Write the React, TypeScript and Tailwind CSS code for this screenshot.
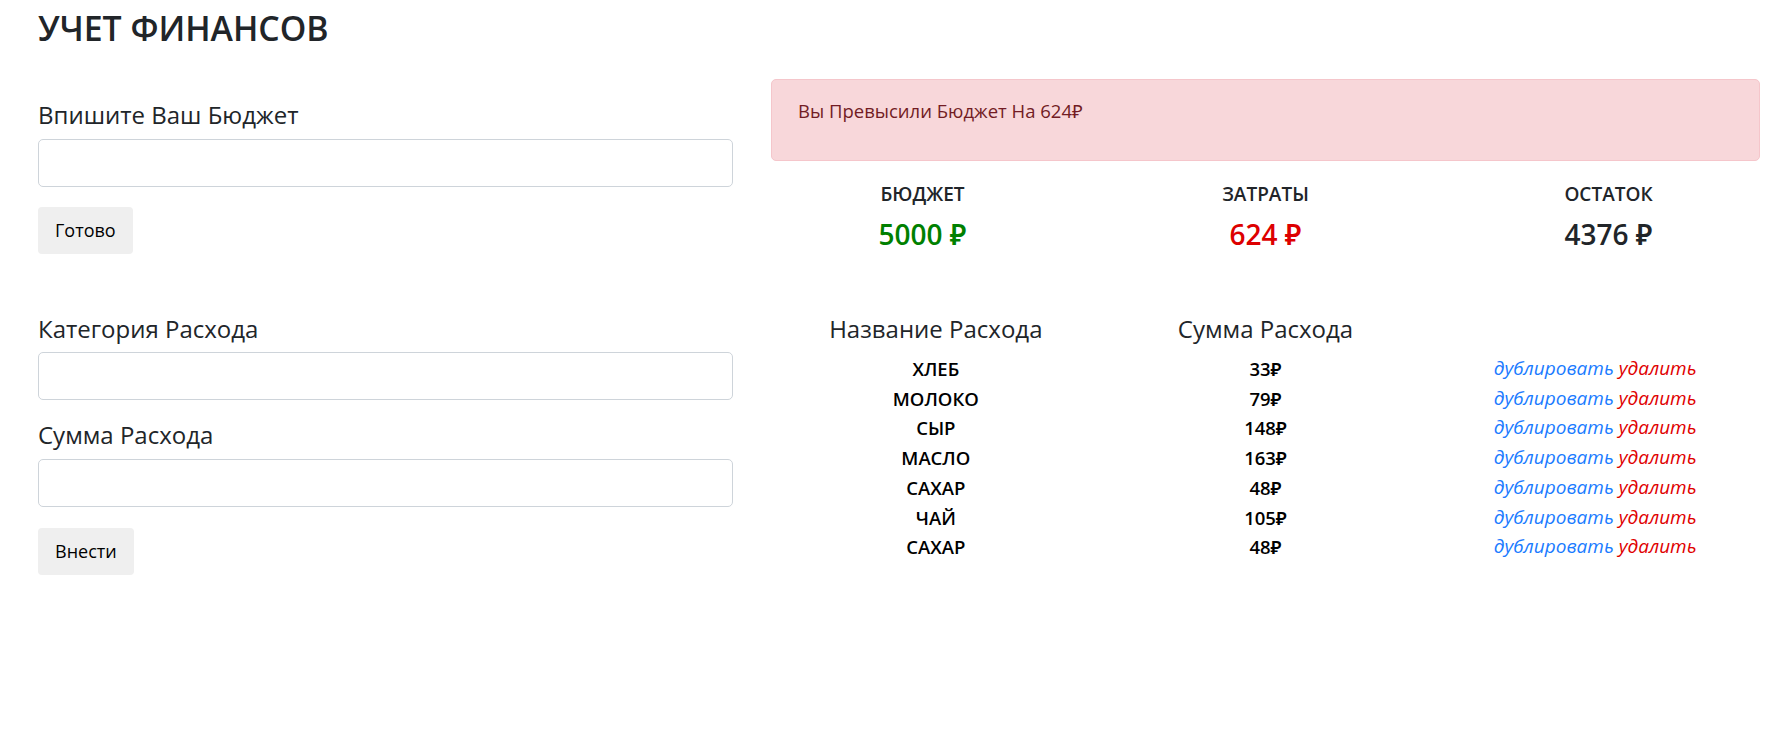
import React from "react";

const items: [string, string][] = [
  ["ХЛЕБ", "33₽"],
  ["МОЛОКО", "79₽"],
  ["СЫР", "148₽"],
  ["МАСЛО", "163₽"],
  ["САХАР", "48₽"],
  ["ЧАЙ", "105₽"],
  ["САХАР", "48₽"],
];

const font = { fontFamily: '"Open Sans", "Noto Sans", sans-serif' };

export default function App() {
  return (
    <div
      className="min-h-[731px] w-[1792px] bg-white text-[#212529] pl-[38px]"
      style={font}
    >
      <h1 className="pt-[9px] text-[33.8px] leading-[39px] font-semibold">УЧЕТ ФИНАНСОВ</h1>

      {/* row 1 */}
      <div className="mt-[31px] flex items-start gap-[38px]">
        <div className="w-[695px] shrink-0 pt-[21px]">
          <h4 className="text-[24px] leading-[29px] font-medium mb-[10px]">Впишите Ваш Бюджет</h4>
          <input className="block w-full h-[48px] rounded-[5px] border border-[#ced4da] bg-white outline-none" />
          <button className="mt-[20px] h-[47px] px-[17px] rounded-[4px] bg-[#efefef] text-[18px] text-black">
            Готово
          </button>
        </div>
        <div className="w-[989px] shrink-0">
          <div className="h-[82px] rounded-[5px] border border-[#f5c6cb] bg-[#f8d7da] px-[26px] pt-[17px] text-[18.5px] leading-[27px] text-[#721c24]">
            Вы Превысили Бюджет На 624₽
          </div>
          <div className="-mx-[20px] mt-[20px] grid grid-cols-3 text-center">
            {[
              ["БЮДЖЕТ", "5000 ₽", "text-[#008000]"],
              ["ЗАТРАТЫ", "624 ₽", "text-[#dd0000]"],
              ["ОСТАТОК", "4376 ₽", "text-[#212529]"],
            ].map(([l, v, c]) => (
              <div key={l}>
                <div className="text-[19px] leading-[27px] font-semibold">{l}</div>
                <div className={`mt-[9px] text-[28px] leading-[34px] font-semibold ${c}`}>{v}</div>
              </div>
            ))}
          </div>
        </div>
      </div>

      {/* row 2 */}
      <div className="mt-[60px] flex items-start gap-[38px]">
        <div className="w-[695px] shrink-0">
          <h4 className="text-[24px] leading-[29px] font-medium mb-[9px]">Категория Расхода</h4>
          <input className="block w-full h-[48px] rounded-[5px] border border-[#ced4da] bg-white outline-none" />
          <h4 className="mt-[20px] text-[24px] leading-[29px] font-medium mb-[10px]">Сумма Расхода</h4>
          <input className="block w-full h-[48px] rounded-[5px] border border-[#ced4da] bg-white outline-none" />
          <button className="mt-[21px] h-[47px] px-[17px] rounded-[4px] bg-[#efefef] text-[18px] text-black">
            Внести
          </button>
        </div>
        <div className="w-[989px] shrink-0">
          <div className="grid grid-cols-3 text-center">
            <div className="text-[24px] leading-[29px] font-medium">Название Расхода</div>
            <div className="text-[24px] leading-[29px] font-medium">Сумма Расхода</div>
            <div />
          </div>
          <div className="mt-[11px]">
            {items.map(([n, s], i) => (
              <div key={i} className="grid grid-cols-3 text-center text-[18.5px] leading-[29.7px]">
                <div className="font-semibold text-black">{n}</div>
                <div className="font-semibold text-black">{s}</div>
                <div className="italic text-[19px]">
                  <span className="text-[#1a7bff]">дублировать</span>{" "}
                  <span className="text-[#e00000]">удалить</span>
                </div>
              </div>
            ))}
          </div>
        </div>
      </div>
    </div>
  );
}
